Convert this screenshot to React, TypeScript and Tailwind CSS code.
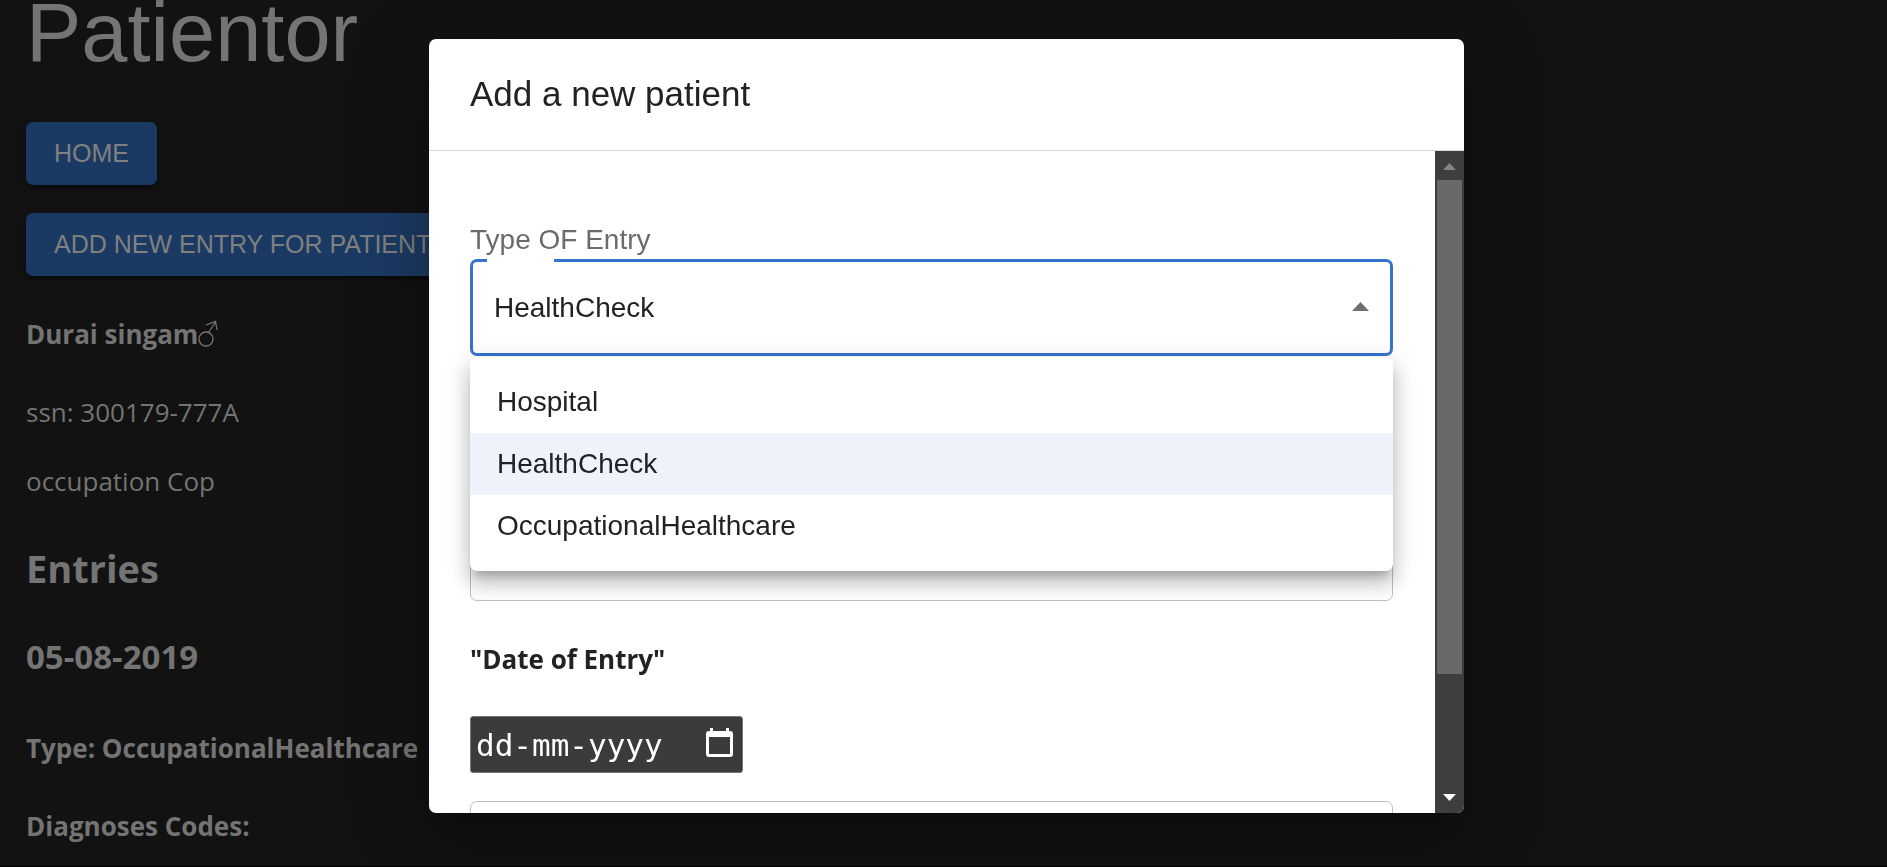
import { useState } from 'react';

const entryTypes = ['Hospital', 'HealthCheck', 'OccupationalHealthcare'];

function MaleIcon() {
  return (
    <svg className="inline-block w-5 h-7" viewBox="0 0 20 28" fill="none" stroke="currentColor" strokeWidth="1.3" role="img" aria-label="male">
      <circle cx="8" cy="19" r="7" />
      <path d="M10.5 12.5L17.5 2M8 5L17.5 1.500L19 10" />
    </svg>
  );
}

function PatientPage() {
  return (
    <main className="h-screen overflow-hidden bg-[#121212] pl-[26px] font-['Open_Sans','Noto_Sans',sans-serif] text-[26px] leading-[38px] text-[#747474]">
      <h1 className="font-['Liberation_Sans',Arial,sans-serif] text-[83px] leading-[66px]">Patientor</h1>
      <div className="mt-14 flex flex-col items-start gap-7 font-['Liberation_Sans',Arial,sans-serif] text-[25px] text-[#808080]">
        <button type="button" className="h-[63px] rounded-[7px] bg-[#1b3a63] px-7 pb-0.5 shadow-[0_3px_5px_rgba(0,0,0,0.5)]">
          HOME
        </button>
        <button type="button" className="h-[63px] whitespace-nowrap rounded-[7px] bg-[#1b3a63] px-7 pb-0.5 shadow-[0_3px_5px_rgba(0,0,0,0.5)]">
          ADD NEW ENTRY FOR PATIENT
        </button>
      </div>
      <h4 className="mt-[39px] flex items-center font-bold">
        Durai singam
        <MaleIcon />
      </h4>
      <p className="mt-10">ssn: 300179-777A</p>
      <p className="mt-[31px]">occupation Cop</p>
      <h2 className="mt-[42px] text-[38px] leading-[52px] font-bold">Entries</h2>
      <h3 className="mt-[42px] text-[33px] leading-[42px] font-bold">05-08-2019</h3>
      <h4 className="mt-[51px] font-bold">Type: OccupationalHealthcare</h4>
      <h4 className="mt-10 font-bold">Diagnoses Codes:</h4>
    </main>
  );
}

function EntryTypeSelect() {
  const [entryType, setEntryType] = useState('HealthCheck');

  return (
    <div>
      <label htmlFor="entry-type" className="block leading-[38px] text-[#6b6b6b]">Type OF Entry</label>
      <div className="relative">
        <select
          id="entry-type"
          value={entryType}
          onChange={(event) => setEntryType(event.target.value)}
          className="block h-[97px] w-full appearance-none rounded-[7px] border-3 border-[#3574ce] bg-white px-[21px] text-[#212126] outline-none"
        >
          {entryTypes.map((type) => (
            <option key={type}>{type}</option>
          ))}
        </select>
        {/* Notch left open in the outline */}
        <span className="absolute top-0 left-[17px] h-[3px] w-[67px] bg-white" />
        <svg className="pointer-events-none absolute top-[43px] right-6 h-[9px] w-[17px]" viewBox="0 0 17 9" fill="#707070">
          <path d="M8.5 0L17 9H0z" />
        </svg>

        <ul
          role="listbox"
          aria-label="Type OF Entry"
          className="absolute top-full right-0 left-0 z-10 mt-px rounded-[7px] bg-white py-3.5 shadow-[0_9px_9px_-5px_rgba(0,0,0,0.2),0_14px_17px_2px_rgba(0,0,0,0.14),0_5px_24px_3px_rgba(0,0,0,0.12)]"
        >
          {entryTypes.map((type) => (
            <li
              key={type}
              role="option"
              aria-selected={type === entryType}
              onClick={() => setEntryType(type)}
              className="flex h-[62px] cursor-pointer items-center px-[27px] aria-selected:bg-[#eef3fb]"
            >
              {type}
            </li>
          ))}
        </ul>
      </div>
    </div>
  );
}

function DateField() {
  return (
    <div>
      <label htmlFor="entry-date" className="block font-['Open_Sans','Noto_Sans',sans-serif] text-[26px] leading-[38px] font-bold">
        "Date of Entry"
      </label>
      <div className="mt-[38px] flex h-[57px] w-[273px] items-center rounded-[3px] border border-[#767676] bg-[#3b3b3b] pr-[9px] pl-[5px] text-white">
        <input
          id="entry-date"
          type="text"
          placeholder="dd-mm-yyyy"
          className="min-w-0 flex-1 bg-transparent pt-0.5 font-['DejaVu_Sans_Mono',monospace] text-[31px] outline-none placeholder:text-white"
        />
        <button type="button" aria-label="Open calendar">
          <svg className="mb-1 h-[29px] w-[27px]" viewBox="0 0 27 29" fill="currentColor">
            <path d="M4 0h3v3h13V0h3v3h1a3 3 0 013 3v20a3 3 0 01-3 3H3a3 3 0 01-3-3V6a3 3 0 013-3h1zM3 9v17h21V9z" fillRule="evenodd" />
          </svg>
        </button>
      </div>
    </div>
  );
}

function Scrollbar() {
  return (
    <div className="flex w-[29px] shrink-0 flex-col items-center bg-[#3e3e3e]" aria-hidden="true">
      <svg className="h-[29px] w-[29px] shrink-0" viewBox="0 0 29 29" fill="#858585">
        <path d="M8 19h13L14.500 12z" />
      </svg>
      <div className="w-[25px] grow-[494] basis-0 bg-[#686a69]" />
      <div className="grow-[110] basis-0" />
      <svg className="h-[29px] w-[29px] shrink-0" viewBox="0 0 29 29" fill="#ffffff">
        <path d="M8 10h13L14.500 17z" />
      </svg>
    </div>
  );
}

function AddEntryDialog() {
  return (
    <div className="fixed inset-0 flex justify-center border-b border-black pt-[39px] pb-[53px] pl-1.5">
      <div
        role="dialog"
        aria-labelledby="dialog-title"
        className="flex w-full max-w-[1035px] flex-col overflow-hidden rounded-[7px] bg-white font-['Liberation_Sans',Arial,sans-serif] text-[28px] text-[#212126] shadow-[0_19px_26px_-12px_rgba(0,0,0,0.2),0_42px_66px_5px_rgba(0,0,0,0.14),0_16px_80px_14px_rgba(0,0,0,0.12)]"
      >
        <h2 id="dialog-title" className="flex h-28 shrink-0 items-center border-b border-[#d8d8d8] px-[41px] text-[35px]">
          Add a new patient
        </h2>
        <div className="flex min-h-0 flex-1">
          <form className="min-w-0 flex-1 overflow-hidden pt-[70px] pr-[42px] pl-[41px]">
            <EntryTypeSelect />
            <input
              type="text"
              aria-label="Description"
              className="mt-[148px] mb-[39px] block h-[97px] w-full rounded-[7px] border border-[#c0c0c0] px-6"
            />
            <DateField />
            <input
              type="text"
              aria-label="Specialist"
              className="mt-7 block h-[97px] w-full rounded-[7px] border border-[#c0c0c0] px-6"
            />
          </form>
          <Scrollbar />
        </div>
      </div>
    </div>
  );
}

export default function App() {
  return (
    <>
      <PatientPage />
      <AddEntryDialog />
    </>
  );
}
